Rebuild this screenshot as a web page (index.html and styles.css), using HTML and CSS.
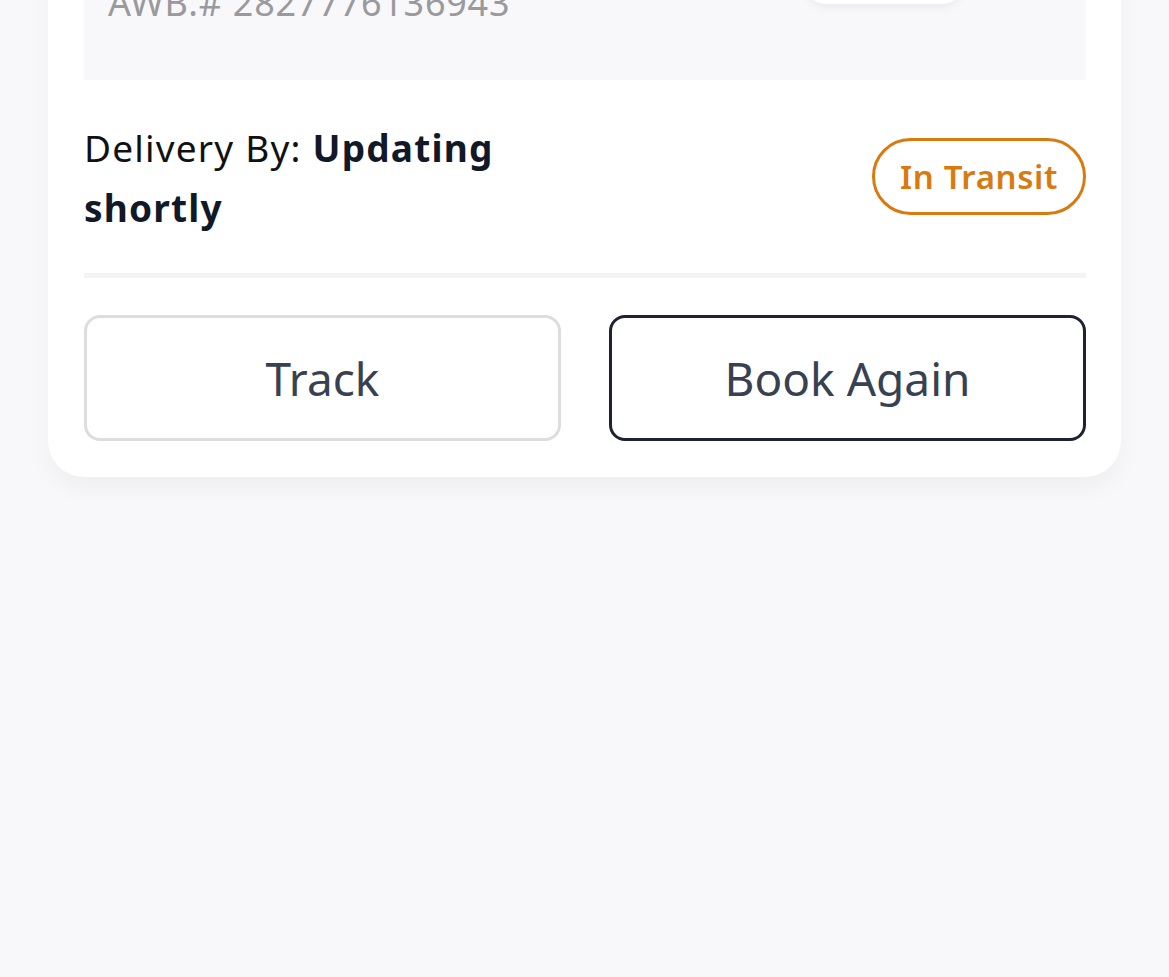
FILE: index.html
```html
<!DOCTYPE html>
<html lang="en">
<head>
<meta charset="utf-8">
<title>Shipment</title>
<link rel="stylesheet" href="styles.css">
</head>
<body>
<div class="page">
  <div class="card">
    <div class="awb-box">
      <div class="awb">AWB.# 2827776136943</div>
      <div class="chip"></div>
    </div>
    <div class="delivery-row">
      <div class="delivery">Delivery By: <strong>Updating shortly</strong></div>
      <div class="status">In Transit</div>
    </div>
    <div class="divider"></div>
    <div class="actions">
      <button class="btn btn-light">Track</button>
      <button class="btn btn-dark">Book Again</button>
    </div>
  </div>
</div>
</body>
</html>
```

FILE: styles.css
```css
* { box-sizing: border-box; }
html, body { margin: 0; padding: 0; }
body {
  background: #f8f8fa;
  font-family: "Noto Sans", "Open Sans", sans-serif;
  width: 1169px;
  height: 977px;
  overflow: hidden;
}
.page {
  padding: 0 48px;
  margin-top: -40px;
}
.card {
  background: #ffffff;
  border-radius: 0 0 36px 36px;
  padding: 0 35px 36px 36px;
  box-shadow: 0 12px 24px rgba(20, 20, 40, 0.04);
}
.awb-box {
  position: relative;
  background: #f8f8fa;
  height: 120px;
  padding: 23px 24px 0;
}
.awb {
  font-size: 36px;
  letter-spacing: 0.75px;
  color: #9a9a9e;
  line-height: 40px;
}
.chip {
  position: absolute;
  top: 0;
  left: 720px;
  width: 160px;
  height: 44px;
  background: #ffffff;
  border-radius: 22px;
  box-shadow: 0 4px 8px rgba(0, 0, 0, 0.05);
}
.delivery-row {
  display: flex;
  justify-content: space-between;
  align-items: flex-start;
  padding-top: 38px;
  padding-bottom: 35px;
}
.delivery {
  width: 510px;
  font-size: 37px;
  letter-spacing: 1.2px;
  line-height: 60px;
  color: #111111;
}
.delivery strong {
  font-weight: 700;
  color: #111827;
}
.status {
  margin-top: 20px;
  border: 3px solid #d97a11;
  color: #d97a11;
  border-radius: 40px;
  height: 77px;
  padding: 0 25px;
  display: flex;
  align-items: center;
  font-size: 33px;
  letter-spacing: 0.6px;
  font-weight: 600;
}
.divider {
  height: 5px;
  background: #f4f4f6;
}
.actions {
  display: flex;
  gap: 48px;
  margin-top: 37px;
}
.btn {
  flex: 1;
  height: 126px;
  border-radius: 16px;
  background: #ffffff;
  font-family: inherit;
  font-size: 46px;
  color: #374151;
  cursor: pointer;
}
.btn-light { border: 3px solid #dddddd; }
.btn-dark { border: 3px solid #1f2230; }
```
